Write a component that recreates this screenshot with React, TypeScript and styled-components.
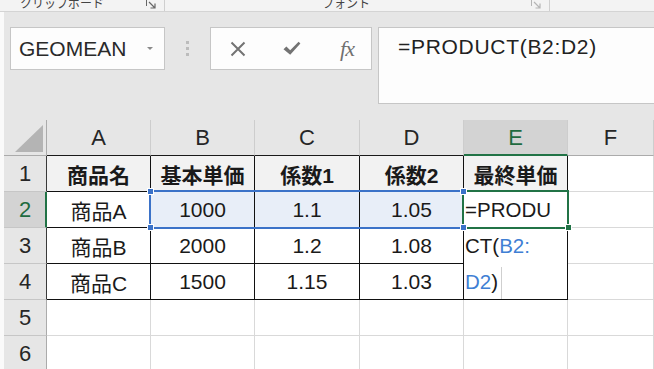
import React from 'react';
import styled, { createGlobalStyle, css } from 'styled-components';

const GlobalStyle = createGlobalStyle`
  html, body { margin: 0; padding: 0; background: #e6e6e6; }
  body { width: 654px; height: 369px; overflow: hidden; font-family: "Liberation Sans", "Noto Sans CJK JP", sans-serif; }
`;

const Page = styled.div`
  width: 654px;
  height: 369px;
  overflow: hidden;
  display: flex;
  flex-direction: column;
  background: #e6e6e6;
`;

const Ribbon = styled.div`
  flex: none;
  height: 11px;
  background: #f3f3f3;
  border-bottom: 1px solid #d4d4d4;
  display: flex;
  overflow: hidden;
`;

const RibbonGroup = styled.div<{ $w: number; $pad: number }>`
  flex: none;
  width: ${(p) => p.$w}px;
  padding-left: ${(p) => p.$pad}px;
  box-sizing: border-box;
  display: flex;
  align-items: flex-end;
  border-right: 1px solid #cfcfcf;
`;

const RibbonLabel = styled.span`
  font-family: "Noto Sans CJK JP", sans-serif;
  font-size: 12px;
  line-height: 12px;
  color: #444;
  margin-bottom: 2px;
  white-space: nowrap;
`;

const Launcher = styled.svg<{ $light?: boolean }>`
  margin-left: auto;
  margin-right: 8px;
  margin-bottom: 2px;
  color: ${(p) => (p.$light ? '#b5b5b5' : '#666')};
`;

const Lower = styled.div`
  flex: 1;
  display: flex;
  flex-direction: column;
  border-left: 4px solid #fafafa;
`;

const FormulaArea = styled.div`
  flex: none;
  height: 108px;
  box-sizing: border-box;
  padding: 15px 0 0 6px;
  display: flex;
  align-items: flex-start;
`;

const NameBox = styled.div`
  flex: none;
  width: 155px;
  height: 43px;
  box-sizing: border-box;
  border: 1px solid #c6c6c6;
  background: #fdfdfd;
  display: flex;
  align-items: center;
  padding-left: 8px;
`;

const NameText = styled.span`
  font-size: 21px;
  color: #2a2a2a;
`;

const DropArrow = styled.span`
  margin-left: auto;
  margin-right: 11px;
  width: 0;
  height: 0;
  border-left: 3px solid transparent;
  border-right: 3px solid transparent;
  border-top: 3px solid #8a8a8a;
`;

const Grip = styled.div`
  flex: none;
  width: 45px;
  height: 43px;
  display: flex;
  flex-direction: column;
  align-items: center;
  justify-content: center;
  gap: 3px;
`;

const GripDot = styled.span`
  width: 3px;
  height: 3px;
  background: #bcbcbc;
`;

const ButtonBox = styled.div`
  flex: none;
  width: 162px;
  height: 43px;
  box-sizing: border-box;
  border: 1px solid #c6c6c6;
  background: #fdfdfd;
  display: flex;
  align-items: center;
`;

const IconSlot = styled.div`
  flex: none;
  width: 54px;
  height: 100%;
  display: flex;
  align-items: center;
  justify-content: center;
  color: #737373;
`;

const FxText = styled.span`
  font-family: "Liberation Serif", serif;
  font-style: italic;
  font-size: 22px;
  color: #707070;
  letter-spacing: -1px;
  margin-left: 2px;
`;

const FormulaBox = styled.div`
  flex: 1;
  margin-left: 6px;
  height: 77px;
  box-sizing: border-box;
  border: 1px solid #c6c6c6;
  border-right: none;
  background: #fdfdfd;
  padding: 6px 0 0 19px;
  font-size: 21px;
  line-height: 26px;
  letter-spacing: 0.7px;
  color: #222;
`;

const Grid = styled.div`
  position: relative;
  display: grid;
  grid-template-columns: 43px 104px 104px 105px 104px 104px 1fr;
  grid-template-rows: repeat(7, 36px);
  background: #fff;
`;

const cellBase = css`
  box-sizing: border-box;
  display: flex;
  align-items: center;
  justify-content: center;
  white-space: nowrap;
  overflow: hidden;
`;

const Corner = styled.div`
  ${cellBase};
  position: relative;
  background: #e6e6e6;
  border-right: 1px solid #ababab;
  border-bottom: 1px solid #ababab;
`;

const CornerTriangle = styled.span`
  position: absolute;
  right: 3px;
  bottom: 3px;
  width: 0;
  height: 0;
  border-left: 28px solid transparent;
  border-bottom: 27px solid #b4b4b4;
`;

const ColHead = styled.div<{ $active?: boolean; $edge?: boolean }>`
  ${cellBase};
  background: ${(p) => (p.$active ? '#d3d3d3' : '#e6e6e6')};
  border-right: 1px solid #cdcdcd;
  border-bottom: ${(p) => (p.$active ? '2px solid #217346' : p.$edge ? '1px solid #1a1a1a' : '1px solid #ababab')};
  font-size: 22px;
  color: ${(p) => (p.$active ? '#1f6b40' : '#262626')};
  padding-top: ${(p) => (p.$active ? '1px' : '0')};
`;

const RowHead = styled.div<{ $active?: boolean; $edge?: boolean }>`
  ${cellBase};
  background: ${(p) => (p.$active ? '#d3d3d3' : '#e6e6e6')};
  border-right: ${(p) => (p.$active ? '2px solid #217346' : p.$edge ? '1px solid #3a3a3a' : '1px solid #ababab')};
  border-bottom: 1px solid #c6c6c6;
  font-size: 22px;
  color: ${(p) => (p.$active ? '#1f6b40' : '#262626')};
  padding-left: ${(p) => (p.$active ? '1px' : '0')};
`;

const Cell = styled.div<{ $table?: boolean; $head?: boolean; $sel?: boolean; $left?: boolean; $span?: number }>`
  ${cellBase};
  background: ${(p) => (p.$head ? '#f2f2f2' : p.$sel ? '#e8eef8' : '#fff')};
  border-right: 1px solid ${(p) => (p.$table ? '#111' : '#d9d9d9')};
  border-bottom: 1px solid ${(p) => (p.$table ? '#111' : '#d9d9d9')};
  font-size: 21px;
  font-weight: ${(p) => (p.$head ? 700 : 400)};
  color: #1a1a1a;
  ${(p) =>
    p.$left &&
    css`
      justify-content: flex-start;
      padding-left: 1px;
      font-size: 20.5px;
    `}
  ${(p) =>
    p.$span &&
    css`
      grid-row: span ${p.$span};
      flex-direction: column;
      align-items: flex-start;
      justify-content: flex-start;
      line-height: 36px;
    `}
`;

const Ref = styled.span`
  color: #3f7fd4;
`;

const Caret = styled.span`
  display: inline-block;
  width: 1px;
  height: 33px;
  background: #cfcfcf;
  vertical-align: middle;
  margin-left: 3px;
`;

const Line = styled.span`
  display: block;
  height: 36px;
`;

const Frame = styled.div<{ $color: string; $x: number; $y: number; $w: number; $h: number }>`
  position: absolute;
  left: ${(p) => p.$x}px;
  top: ${(p) => p.$y}px;
  width: ${(p) => p.$w}px;
  height: ${(p) => p.$h}px;
  box-sizing: border-box;
  border: 2px solid ${(p) => p.$color};
  pointer-events: none;
`;

const Handle = styled.span<{ $color: string; $x: number; $y: number }>`
  position: absolute;
  left: ${(p) => p.$x}px;
  top: ${(p) => p.$y}px;
  width: 5px;
  height: 5px;
  background: ${(p) => p.$color};
  border: 1px solid #fff;
  box-sizing: content-box;
`;

const cols = ['A', 'B', 'C', 'D', 'E', 'F'];
const rows: string[][] = [
  ['商品名', '基本単価', '係数1', '係数2', '最終単価'],
  ['商品A', '1000', '1.1', '1.05'],
  ['商品B', '2000', '1.2', '1.08'],
  ['商品C', '1500', '1.15', '1.03'],
];

const Launch = ({ light }: { light?: boolean }) => (
  <Launcher $light={light} width="10" height="10" viewBox="0 0 10 10">
    <path d="M0.5 7V0.5H7" fill="none" stroke="currentColor" strokeWidth="1" />
    <path d="M3 3L8.5 8.5M9 4.5V9H4.5" fill="none" stroke="currentColor" strokeWidth="1.2" />
  </Launcher>
);

export default function App() {
  const BLUE = '#3b72c8';
  const GREEN = '#217346';
  return (
    <Page>
      <GlobalStyle />
      <Ribbon>
        <RibbonGroup $w={165} $pad={20}>
          <RibbonLabel>クリップボード</RibbonLabel>
          <Launch />
        </RibbonGroup>
        <RibbonGroup $w={385} $pad={157}>
          <RibbonLabel>フォント</RibbonLabel>
          <Launch light />
        </RibbonGroup>
      </Ribbon>
      <Lower>
        <FormulaArea>
          <NameBox>
            <NameText>GEOMEAN</NameText>
            <DropArrow />
          </NameBox>
          <Grip>
            <GripDot />
            <GripDot />
            <GripDot />
          </Grip>
          <ButtonBox>
            <IconSlot>
              <svg width="16" height="16" viewBox="0 0 16 16">
                <path d="M1.5 1.5L14.5 14.5M14.5 1.5L1.5 14.5" stroke="currentColor" strokeWidth="2" />
              </svg>
            </IconSlot>
            <IconSlot>
              <svg width="18" height="15" viewBox="0 0 18 15">
                <path d="M0.5 8.2L3.4 5.6L7.2 9.2L15.6 0.8L17.4 2.6L7.2 13.8Z" fill="currentColor" />
              </svg>
            </IconSlot>
            <IconSlot>
              <FxText>fx</FxText>
            </IconSlot>
          </ButtonBox>
          <FormulaBox>=PRODUCT(B2:D2)</FormulaBox>
        </FormulaArea>
        <Grid>
          <Corner>
            <CornerTriangle />
          </Corner>
          {cols.map((c, i) => (
            <ColHead key={c} $active={c === 'E'} $edge={i < 5}>
              {c}
            </ColHead>
          ))}

          <RowHead $edge>1</RowHead>
          {rows[0].map((t) => (
            <Cell key={t} $table $head>
              {t}
            </Cell>
          ))}
          <Cell />

          <RowHead $active>2</RowHead>
          <Cell $table>{rows[1][0]}</Cell>
          <Cell $table $sel>{rows[1][1]}</Cell>
          <Cell $table $sel>{rows[1][2]}</Cell>
          <Cell $table $sel>{rows[1][3]}</Cell>
          <Cell $table $left>=PRODU</Cell>
          <Cell />

          <RowHead $edge>3</RowHead>
          {rows[2].map((t) => (
            <Cell key={t} $table>
              {t}
            </Cell>
          ))}
          <Cell $table $left $span={2}>
            <Line>
              CT(<Ref>B2:</Ref>
            </Line>
            <Line>
              <Ref>D2</Ref>)<Caret />
            </Line>
          </Cell>
          <Cell />

          <RowHead $edge>4</RowHead>
          {rows[3].map((t) => (
            <Cell key={t} $table>
              {t}
            </Cell>
          ))}
          <Cell />

          {[5, 6].map((r) => (
            <React.Fragment key={r}>
              <RowHead>{r}</RowHead>
              <Cell />
              <Cell />
              <Cell />
              <Cell />
              <Cell />
              <Cell />
            </React.Fragment>
          ))}

          <Frame $color={BLUE} $x={145} $y={70} $w={315} $h={39} />
          <Frame $color={GREEN} $x={458} $y={70} $w={107} $h={39} />
          <Handle $color={GREEN} $x={561} $y={104} />
          <Handle $color={BLUE} $x={143} $y={68} />
          <Handle $color={BLUE} $x={143} $y={104} />
          <Handle $color={BLUE} $x={456} $y={68} />
          <Handle $color={BLUE} $x={456} $y={104} />
        </Grid>
      </Lower>
    </Page>
  );
}
